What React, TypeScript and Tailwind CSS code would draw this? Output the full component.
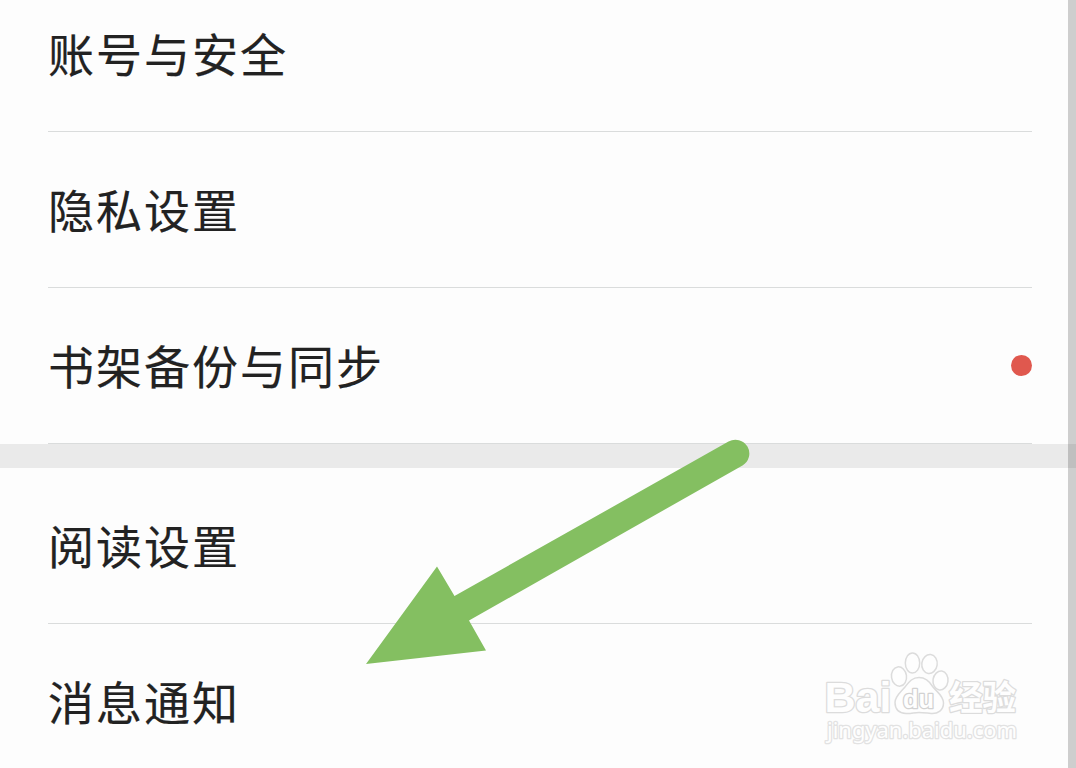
type RowProps = { label: string; dot?: boolean; last?: boolean };

function Row({ label, dot, last }: RowProps) {
  return (
    <div
      className={
        last
          ? 'ml-12 mr-9 flex h-39 shrink-0 items-center justify-between'
          : 'ml-12 mr-9 flex h-39 shrink-0 items-center justify-between border-b border-[#dadcdc]'
      }
    >
      <span className="pb-1 text-[46px] leading-[60px] tracking-[2px] [-webkit-text-stroke:0.2px_#222222]">
        {label}
      </span>
      {dot && <span className="mr-[0.5px] size-[21px] rounded-full bg-[#e0584e]" />}
    </div>
  );
}

function Arrow() {
  return (
    <svg className="absolute left-0 top-0" width="1076" height="768" viewBox="0 0 1076 768">
      <path
        d="M366 664 L437 566.5 L454.5 596 L728.5 441.6 A13.8 13.8 0 0 1 742.5 465.5 L469 620.5 L486 650.5 Z"
        fill="#84bf61"
      />
    </svg>
  );
}

function Watermark() {
  return (
    <svg
      className="absolute left-[816px] top-[644px]"
      width="216"
      height="110"
      viewBox="816 644 216 110"
      strokeLinejoin="round"
    >
      <g fill="#fefefe" stroke="#dcdcdc" strokeWidth="1.5">
        <ellipse cx="912.5" cy="663" rx="7.2" ry="10" />
        <ellipse cx="929.5" cy="664" rx="7.7" ry="9.5" transform="rotate(8 929.5 664)" />
        <ellipse cx="899" cy="676.5" rx="7.5" ry="9.7" transform="rotate(-8 899 676.5)" />
        <ellipse cx="940.5" cy="680.5" rx="7.5" ry="9.5" transform="rotate(8 940.5 680.5)" />
        <path d="M919 677.5 C926 677.5 930 682 933 687 C937 692 943.5 696 943.5 703 C943.5 710 938 714 931 713.5 C926 713 923 712.5 919 712.5 C914 712.5 911 714 906 713.5 C899 713 895 709 895 702.5 C895 696 901 692 905 687 C909 682 912 677.5 919 677.5 Z" />
      </g>
      <g
        fill="#fefefe"
        stroke="#dcdcdc"
        strokeWidth="2.6"
        paintOrder="stroke"
        fontFamily="Liberation Sans, sans-serif"
        fontWeight="700"
      >
        <text x="824.5" y="712" fontSize="43" textLength="67" lengthAdjust="spacingAndGlyphs">
          Bai
        </text>
        <text
          x="903"
          y="707.5"
          fontSize="25"
          stroke="#d2d2d2"
          textLength="31"
          lengthAdjust="spacingAndGlyphs"
        >
          du
        </text>
        <text
          x="949"
          y="709.5"
          fontSize="34"
          fontFamily="Noto Sans CJK SC, sans-serif"
          textLength="67"
          lengthAdjust="spacingAndGlyphs"
        >
          经验
        </text>
      </g>
      <text
        x="827"
        y="738"
        fontSize="22"
        fontFamily="Noto Sans, sans-serif"
        textLength="190"
        lengthAdjust="spacingAndGlyphs"
        fill="#fefefe"
        stroke="#e2e2e2"
        strokeWidth="2.6"
        paintOrder="stroke"
      >
        jingyan.baidu.com
      </text>
    </svg>
  );
}

export default function App() {
  return (
    <div className="relative flex h-[768px] w-[1076px] overflow-hidden bg-[#fdfdfd] font-['Noto_Sans_CJK_SC',sans-serif] text-[#222222]">
      <main className="flex min-w-0 flex-1 flex-col">
        <section className="-mt-6 flex flex-col">
          <Row label="账号与安全" />
          <Row label="隐私设置" />
          <Row label="书架备份与同步" dot />
        </section>
        <div className="h-6 shrink-0 bg-[#eaeaea]" />
        <section className="flex flex-col">
          <Row label="阅读设置" />
          <Row label="消息通知" last />
        </section>
      </main>
      <aside className="flex w-2 flex-col bg-[#cecece]">
        <div className="mt-[444px] h-6 bg-[#bfbfbf]" />
      </aside>
      <Arrow />
      <Watermark />
    </div>
  );
}
